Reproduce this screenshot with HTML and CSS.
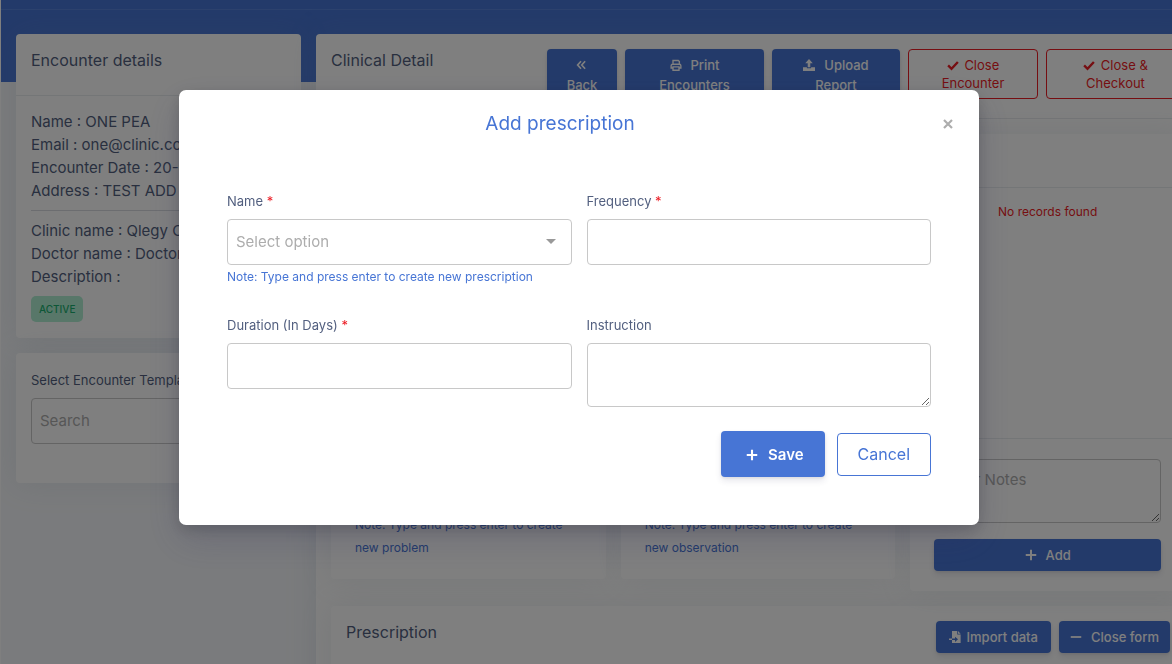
FILE: index.html
```
<!DOCTYPE html>
<html lang="en">
<head>
    <meta charset="UTF-8">
    <meta name="viewport" content="width=device-width, initial-scale=1.0">
    <title>Encounter - Add prescription</title>
    <link rel="stylesheet" href="styles.css">
</head>
<body>
    <div class="topbar"></div>

    <main class="dashboard">
        <!-- Left column -->
        <aside class="column">
            <section class="card">
                <div class="card-header">
                    <h2>Encounter details</h2>
                </div>
                <div class="card-body details">
                    <p>Name : ONE PEA</p>
                    <p>Email : one@clinic.com</p>
                    <p>Encounter Date : 20-04-2023</p>
                    <p>Address : TEST ADD</p>
                    <hr>
                    <p>Clinic name : Qlegy Clinic</p>
                    <p>Doctor name : Doctor One</p>
                    <p>Description :</p>
                    <span class="badge">ACTIVE</span>
                </div>
            </section>

            <section class="card template-card">
                <label for="template">Select Encounter Template</label>
                <input type="text" id="template" class="form-control" placeholder="Search">
            </section>
        </aside>

        <!-- Clinical detail -->
        <section class="card clinical">
            <div class="clinical-header">
                <h2>Clinical Detail</h2>
                <div class="toolbar">
                    <button class="btn btn-primary btn-tool back-btn">
                        <svg class="icon" viewBox="0 0 16 16"><path d="M8 3 3.500 8 8 13M13.500 3 9 8l4.500 5" fill="none" stroke="currentColor" stroke-width="2.200"/></svg>
                        <br>Back
                    </button>
                    <button class="btn btn-primary btn-tool print-btn">
                        <svg class="icon" viewBox="0 0 16 16"><path d="M4 7V2h7l1.500 1.500V7M4 12H1.500V9q0-2 2-2h9q2 0 2 2v3H12" fill="none" stroke="currentColor" stroke-width="1.800"/><path d="M4 10.500h8V15H4z" fill="none" stroke="currentColor" stroke-width="1.800"/></svg>
                        &nbsp;Print<br>Encounters
                    </button>
                    <button class="btn btn-primary btn-tool upload-btn">
                        <svg class="icon" viewBox="0 0 16 16"><path d="M8 0l5 5.500H9.700V11H6.300V5.500H3zM0 11h5.200v1.200h5.600V11H16v5H0z" fill="currentColor"/></svg>
                        &nbsp;Upload<br>Report
                    </button>
                    <button class="btn btn-danger btn-tool encounter-btn">
                        <svg class="icon" viewBox="0 0 16 16"><path d="M1.500 8.500 6 13 14.500 4" fill="none" stroke="currentColor" stroke-width="3.200"/></svg>
                        Close<br>Encounter
                    </button>
                    <button class="btn btn-danger btn-tool checkout-btn">
                        <svg class="icon" viewBox="0 0 16 16"><path d="M1.500 8.500 6 13 14.500 4" fill="none" stroke="currentColor" stroke-width="3.200"/></svg>
                        Close &amp;<br>Checkout
                    </button>
                </div>
            </div>

            <div class="clinical-body">
                <div class="panels">
                    <section class="card">
                        <div class="panel-title"></div>
                        <div class="panel-list"></div>
                        <div class="panel-form">
                            <input type="text" class="form-control" aria-label="Problem">
                            <p class="note">Note: Type and press enter to create new problem</p>
                        </div>
                    </section>
                    <section class="card">
                        <div class="panel-title"></div>
                        <div class="panel-list"></div>
                        <div class="panel-form">
                            <input type="text" class="form-control" aria-label="Observation">
                            <p class="note">Note: Type and press enter to create new observation</p>
                        </div>
                    </section>
                    <section class="card">
                        <div class="panel-title"></div>
                        <div class="panel-list">No records found</div>
                        <div class="panel-form">
                            <textarea class="form-control" placeholder="Enter Notes" aria-label="Notes"></textarea>
                            <button class="btn btn-primary btn-small add-btn">
                                <svg class="icon" viewBox="0 0 16 16"><path d="M8 1v14M1 8h14" stroke="currentColor" stroke-width="2.600"/></svg>
                                &nbsp;Add
                            </button>
                        </div>
                    </section>
                </div>

                <section class="card prescription">
                    <h2>Prescription</h2>
                    <div class="toolbar">
                        <button class="btn btn-primary btn-small import-btn">
                            <svg class="icon" viewBox="0 0 16 16"><path d="M4 0h7v4.500h4.500V16H4v-4h4v2.500L12 11 8 7.500V10H4zM12 0l3.500 3.500H12zM0 10h4v2H0z" fill="currentColor"/></svg>
                            Import data
                        </button>
                        <button class="btn btn-primary btn-small close-form-btn">
                            <svg class="icon" viewBox="0 0 16 16"><path d="M1 8h14" stroke="currentColor" stroke-width="2.400"/></svg>
                            &nbsp;Close form
                        </button>
                    </div>
                </section>
            </div>
        </section>
    </main>

    <!-- Add prescription modal -->
    <div class="modal-overlay">
        <div class="modal" role="dialog" aria-labelledby="modalTitle">
            <div class="modal-header">
                <h1 id="modalTitle">Add prescription</h1>
                <button class="close-btn" aria-label="Close">
                    <svg viewBox="0 0 10 10"><path d="M1 1l8 8M9 1 1 9" stroke="currentColor" stroke-width="2.200"/></svg>
                </button>
            </div>
            <form class="modal-body">
                <div class="form-grid">
                    <div class="form-group">
                        <label for="name">Name <span class="required">*</span></label>
                        <div class="select-box">
                            <select id="name" class="form-control">
                                <option>Select option</option>
                            </select>
                            <svg class="caret" viewBox="0 0 10 5"><path d="M0 0h10L5 5z" fill="currentColor"/></svg>
                        </div>
                        <p class="note">Note: Type and press enter to create new prescription</p>
                    </div>
                    <div class="form-group">
                        <label for="frequency">Frequency <span class="required">*</span></label>
                        <input type="text" id="frequency" class="form-control">
                    </div>
                    <div class="form-group">
                        <label for="duration">Duration (In Days) <span class="required">*</span></label>
                        <input type="text" id="duration" class="form-control">
                    </div>
                    <div class="form-group">
                        <label for="instruction">Instruction</label>
                        <textarea id="instruction" class="form-control"></textarea>
                    </div>
                </div>
                <div class="modal-actions">
                    <button type="button" class="btn btn-primary save-btn">
                        <svg class="icon" viewBox="0 0 16 16"><path d="M8 1v14M1 8h14" stroke="currentColor" stroke-width="2.800"/></svg>
                        &nbsp;Save
                    </button>
                    <button type="button" class="btn btn-outline">Cancel</button>
                </div>
            </form>
        </div>
    </div>
</body>
</html>
```
FILE: styles.css
```
/* Basic Reset */
* {
    margin: 0;
    padding: 0;
    box-sizing: border-box;
    font-family: 'Inter', sans-serif;
}

body {
    background: #f5f7fa;
    color: #525f7f;
    border-left: 1px solid #fff;
    height: 100vh;
    overflow: hidden;
    font-size: 15px;
}

h2 {
    font-size: 16px;
    font-weight: 400;
    line-height: 22px;
}

/* Blue band behind the cards */
.topbar {
    height: 10px;
    background: #4775d5;
    border-bottom: 1px solid #5884dc;
}

.dashboard {
    display: grid;
    grid-template-columns: 285fr 884fr;
    gap: 15px;
    align-items: start;
    min-width: 1214px;
    padding: 24px 15px;
    background: linear-gradient(#4775d5, #4775d5) no-repeat 0 0 / 100% 72px;
}

.column {
    display: flex;
    flex-direction: column;
    gap: 15px;
}

/* Cards */
.card {
    background: #fff;
    border-radius: 4px;
    box-shadow: 0 0 32px rgba(136, 152, 170, 0.15);
}

.card-header {
    padding: 15px 15px 24px;
    border-bottom: 1px solid #e9ecef;
}

.card-body {
    padding: 14px 15px 16px;
}

.details p {
    line-height: 23px;
}

.details hr {
    border: none;
    border-top: 1px solid #d8dbe0;
    margin: 8px 0;
}

.badge {
    display: inline-block;
    margin-top: 8px;
    padding: 0 8px;
    border-radius: 5px;
    background: #b0eed3;
    color: #1aae6f;
    font-size: 10px;
    font-weight: 500;
    line-height: 26px;
}

.template-card {
    padding: 15px 15px 39px;
}

/* Form controls */
label {
    display: block;
    margin-bottom: 6px;
    font-size: 13px;
    line-height: 24px;
}

.required {
    color: #ec1c24;
}

.form-control {
    display: block;
    width: 100%;
    height: 46px;
    padding: 8px 8px 10px;
    border: 1px solid #c8c8c8;
    border-radius: 4px;
    background: #fff;
    color: #525f7f;
    font-size: 15px;
}

textarea.form-control {
    height: 64px;
    line-height: 24px;
}

.form-control::placeholder {
    color: #adadad;
}

.note {
    color: #4775d5;
    font-size: 12px;
    line-height: 24px;
}

/* Buttons */
.btn {
    border: 1px solid transparent;
    border-radius: 4px;
    cursor: pointer;
    font-size: 15px;
    font-weight: 500;
}

.btn-primary {
    background: #4775d5;
    color: #fff;
    box-shadow: 0 4px 6px rgba(50, 50, 93, 0.11), 0 1px 3px rgba(0, 0, 0, 0.08);
}

.btn-danger {
    background: transparent;
    border-color: #ec1c24;
    color: #ec1c24;
    font-weight: 400;
}

.btn-outline {
    padding: 0 20px;
    height: 43px;
    background: transparent;
    border-color: #4775d5;
    color: #4775d5;
    font-size: 16px;
    font-weight: 400;
}

.btn-small {
    height: 32px;
    font-size: 13px;
}

.icon {
    width: 12px;
    height: 12px;
    margin-right: 2px;
    vertical-align: -1px;
}

/* Clinical detail */
.clinical-header {
    display: flex;
    justify-content: space-between;
    align-items: flex-start;
    padding: 15px;
    border-bottom: 1px solid #e9ecef;
}

.toolbar {
    display: flex;
    align-items: flex-start;
    gap: 8px;
}

.btn-tool {
    padding: 5px 8px 7px;
    font-size: 13px;
    line-height: 20px;
}

.btn-tool.btn-danger {
    padding: 6px 8px;
    line-height: 18px;
}

.back-btn {
    width: 70px;
}

.print-btn,
.checkout-btn {
    width: 139px;
}

.upload-btn {
    width: 128px;
}

.encounter-btn {
    width: 130px;
}

.clinical-body {
    padding: 15px;
}

.panels {
    display: grid;
    grid-template-columns: repeat(3, 1fr);
    gap: 15px;
    align-items: start;
    margin-bottom: 15px;
}

.panel-title {
    height: 54px;
    border-bottom: 1px solid #e9ecef;
}

.panel-list {
    height: 251px;
    padding: 12px;
    border-bottom: 1px solid #e9ecef;
    color: #ec1c24;
    font-size: 12px;
    line-height: 24px;
    text-align: center;
}

.panel-form {
    padding: 20px 24px;
}

.panel-form .note {
    margin-top: 8px;
    line-height: 23px;
}

.add-btn {
    width: 100%;
    margin-top: 16px;
}

.prescription {
    display: flex;
    justify-content: space-between;
    align-items: flex-start;
    min-height: 160px;
    padding: 15px;
}

.import-btn {
    width: 115px;
}

.close-form-btn {
    width: 111px;
}

/* Modal */
.modal-overlay {
    position: fixed;
    top: 0;
    left: 0;
    width: 100%;
    height: 100%;
    padding: 90px 14px 0 0;
    background: rgba(0, 0, 0, 0.5);
}

.modal {
    max-width: 800px;
    margin: 0 auto;
    border-radius: 7px;
    background: #fff;
    box-shadow: 0 15px 35px rgba(50, 50, 93, 0.2), 0 5px 15px rgba(0, 0, 0, 0.17);
}

.modal-header {
    display: flex;
    align-items: center;
    gap: 24px;
    padding: 20px 24px;
}

.modal-header h1 {
    flex: 1;
    color: #4775d5;
    font-size: 19px;
    font-weight: 400;
    line-height: 28px;
    text-align: center;
}

.close-btn {
    display: flex;
    width: 14px;
    height: 14px;
    padding: 2px;
    border: none;
    background: none;
    color: #adadad;
    cursor: pointer;
}

.modal-body {
    padding: 31px 48px 48px;
}

.form-grid {
    display: grid;
    grid-template-columns: 1fr 1fr;
    gap: 24px 15px;
}

.select-box {
    position: relative;
}

.select-box select {
    appearance: none;
    color: #adadad;
}

.caret {
    position: absolute;
    top: 20px;
    right: 16px;
    width: 10px;
    height: 5px;
    color: #999;
    pointer-events: none;
}

.modal-actions {
    display: flex;
    justify-content: flex-end;
    align-items: center;
    gap: 12px;
    margin-top: 24px;
}

.save-btn {
    height: 46px;
    padding: 0 20px 0 24px;
    font-weight: 600;
}
```
